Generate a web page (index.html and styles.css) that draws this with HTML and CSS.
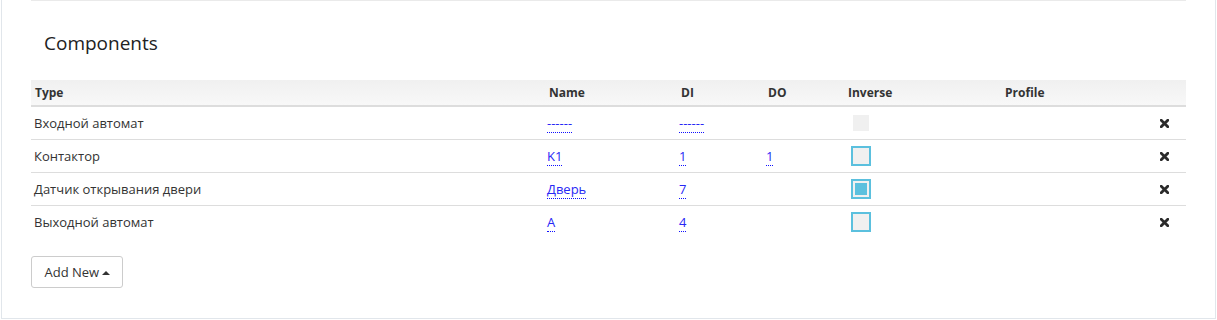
FILE: index.html
```html
<!DOCTYPE html>
<html>
<head>
<meta charset="utf-8">
<link rel="stylesheet" href="styles.css">
</head>
<body>
<div class="panel">
  <div class="topline"></div>
  <h4 class="title">Components</h4>
  <table class="grid">
    <colgroup>
      <col class="c-type"><col class="c-name"><col class="c-di"><col class="c-do"><col class="c-inv"><col class="c-prof"><col class="c-act">
    </colgroup>
    <thead>
      <tr><th>Type</th><th>Name</th><th>DI</th><th>DO</th><th>Inverse</th><th>Profile</th><th></th></tr>
    </thead>
    <tbody>
      <tr>
        <td>Входной автомат</td>
        <td><a class="ed">------</a></td>
        <td><a class="ed">------</a></td>
        <td></td>
        <td><span class="cb disabled"></span></td>
        <td></td>
        <td><span class="rm"><svg width="9" height="9" viewBox="0 0 9 9"><path d="M1.2 1.2 L7.8 7.8 M7.8 1.2 L1.2 7.8" stroke="#2b2b2b" stroke-width="2.8" stroke-linecap="square"/></svg></span></td>
      </tr>
      <tr>
        <td>Контактор</td>
        <td><a class="ed">K1</a></td>
        <td><a class="ed">1</a></td>
        <td><a class="ed">1</a></td>
        <td><span class="cb"></span></td>
        <td></td>
        <td><span class="rm"><svg width="9" height="9" viewBox="0 0 9 9"><path d="M1.2 1.2 L7.8 7.8 M7.8 1.2 L1.2 7.8" stroke="#2b2b2b" stroke-width="2.8" stroke-linecap="square"/></svg></span></td>
      </tr>
      <tr>
        <td>Датчик открывания двери</td>
        <td><a class="ed">Дверь</a></td>
        <td><a class="ed">7</a></td>
        <td></td>
        <td><span class="cb checked"></span></td>
        <td></td>
        <td><span class="rm"><svg width="9" height="9" viewBox="0 0 9 9"><path d="M1.2 1.2 L7.8 7.8 M7.8 1.2 L1.2 7.8" stroke="#2b2b2b" stroke-width="2.8" stroke-linecap="square"/></svg></span></td>
      </tr>
      <tr>
        <td>Выходной автомат</td>
        <td><a class="ed">A</a></td>
        <td><a class="ed">4</a></td>
        <td></td>
        <td><span class="cb"></span></td>
        <td></td>
        <td><span class="rm"><svg width="9" height="9" viewBox="0 0 9 9"><path d="M1.2 1.2 L7.8 7.8 M7.8 1.2 L1.2 7.8" stroke="#2b2b2b" stroke-width="2.8" stroke-linecap="square"/></svg></span></td>
      </tr>
    </tbody>
  </table>
  <button class="btn">Add New <span class="caret"></span></button>
</div>
</body>
</html>
```

FILE: styles.css
```css
html, body {
  margin: 0;
  padding: 0;
  background: #fff;
}
body {
  font-family: "Open Sans", "Liberation Sans", sans-serif;
  font-size: 13px;
  color: #333;
}
.panel {
  margin-left: 1px;
  width: 1155px;
  padding: 0 29px 30px;
  border: 1px solid #e1e6eb;
  border-top: none;
}
.topline {
  height: 1px;
  background: #eaeaea;
}
.title {
  margin: 29px 0 0;
  padding-left: 13px;
  font-size: 19px;
  font-weight: 400;
  line-height: 26px;
  color: #222;
}
.grid {
  margin-top: 24px;
  width: 1155px;
  border-collapse: collapse;
  table-layout: fixed;
}
.c-type { width: 513px; }
.c-name { width: 132px; }
.c-di { width: 87px; }
.c-do { width: 80px; }
.c-inv { width: 157px; }
.c-prof { width: 155px; }
.c-act { width: 31px; }
.grid th {
  text-align: left;
  font-size: 12px;
  font-weight: 700;
  color: #333;
  height: 25px;
  padding: 0 4px 0 5px;
  background: linear-gradient(#f0f0f0, #f8f8f8);
  border-bottom: 2px solid #dddddd;
}
.grid th:first-child {
  padding-left: 4px;
}
.grid td {
  height: 32px;
  padding: 0 3px;
  border-bottom: 1px solid #dddddd;
  vertical-align: middle;
}
.grid tbody tr:last-child td {
  border-bottom: none;
}
.ed {
  color: #2727f5;
  text-decoration: none;
  border-bottom: 1px dotted #1010ff;
}
.cb {
  display: block;
  margin-left: 5px;
  width: 16px;
  height: 16px;
  border: 2px solid #5bc0de;
  background: #f0f0f0;
  position: relative;
}
.cb.disabled {
  margin-left: 7px;
  border: none;
}
.cb.checked::after {
  content: "";
  position: absolute;
  left: 2px;
  top: 2px;
  width: 12px;
  height: 12px;
  background: #5bc0de;
}
.rm {
  display: block;
  padding-left: 2px;
  line-height: 0;
}
.btn {
  margin-top: 18px;
  font-family: "Open Sans", "Liberation Sans", sans-serif;
  font-size: 13px;
  color: #333;
  background: #fff;
  border: 1px solid #cccccc;
  border-radius: 3px;
  height: 32px;
  padding: 0 12px 0 12px;
  width: 92px;
}
.caret {
  display: inline-block;
  width: 0;
  height: 0;
  border-left: 4px solid transparent;
  border-right: 4px solid transparent;
  border-bottom: 4px solid #333;
  vertical-align: 2px;
  margin-left: -1px;
}
```
